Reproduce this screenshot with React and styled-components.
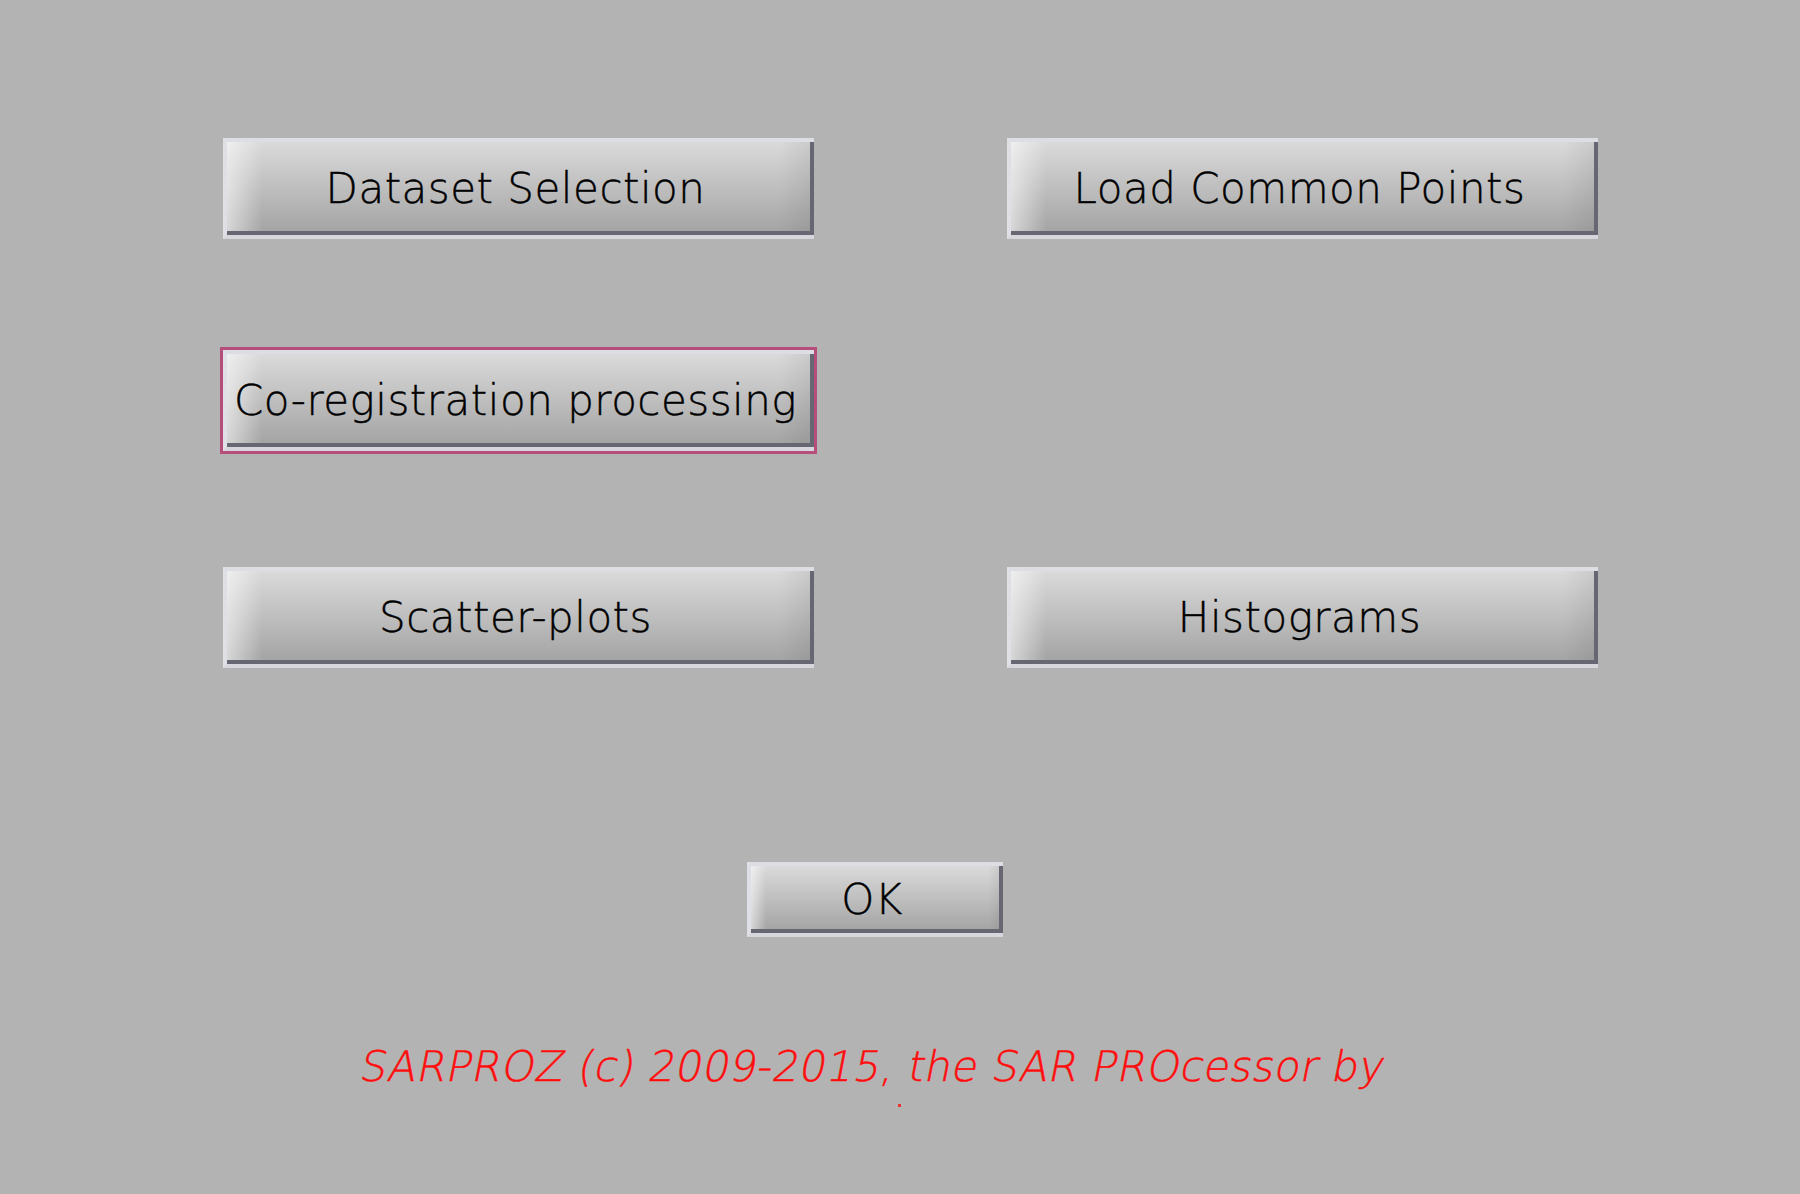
import React from 'react';
import styled, { createGlobalStyle } from 'styled-components';

const GlobalStyle = createGlobalStyle`
  html, body {
    margin: 0;
    padding: 0;
    background: #b3b3b3;
  }
`;

const Page = styled.div`
  width: 1800px;
  height: 1194px;
  background: #b3b3b3;
  overflow: hidden;
  display: flex;
  flex-direction: column;
  padding: 138px 0 0 223px;
  box-sizing: border-box;
  font-family: "DejaVu Sans", sans-serif;
`;

const ButtonGrid = styled.div`
  display: grid;
  grid-template-columns: 591px 591px;
  grid-template-rows: 101px 106px 101px;
  column-gap: 193px;
  row-gap: 111px;
  align-items: start;
`;

const Slot = styled.div``;

const Button = styled.div`
  box-sizing: border-box;
  width: ${props => props.w || 591}px;
  height: ${props => props.h || 101}px;
  display: flex;
  align-items: center;
  justify-content: center;
  padding-right: 10px;
  font-family: "DejaVu Sans", sans-serif;
  font-weight: 200;
  letter-spacing: 0.5px;
  font-size: ${props => props.fs || 42}px;
  color: #000;
  -webkit-text-stroke: 0.4px #000;
  border-top: 4px solid #dddde4;
  border-left: 4px solid #dfdfe6;
  border-bottom: 4px solid #d6d6dc;
  background:
    linear-gradient(to right, rgba(255, 255, 255, 0.55), rgba(255, 255, 255, 0) 6%, rgba(0, 0, 0, 0) 94%, rgba(0, 0, 0, 0.08)),
    linear-gradient(#dadada, #a2a2a2);
  box-shadow: inset -4px -4px 0 #676773;
  outline: ${props => (props.focused ? '3px solid #b64e7c' : 'none')};
  white-space: nowrap;
`;

const OkRow = styled.div`
  margin: 194px 0 0 524px;
`;

const Footer = styled.div`
  margin: 105px 0 0 138px;
  font-family: "DejaVu Sans", sans-serif;
  font-weight: 200;
  letter-spacing: 0.35px;
  font-size: 42px;
  line-height: 50px;
  color: #ff0d0d;
  -webkit-text-stroke: 0.5px #ff0d0d;
  white-space: nowrap;
  transform: skewX(-11deg);
  transform-origin: center;
`;

const Dot = styled.div`
  width: 3px;
  height: 3px;
  background: #ee3030;
  margin: 12px 0 0 675px;
`;

export default function App() {
  return (
    <>
      <GlobalStyle />
      <Page>
        <ButtonGrid>
          <Button>Dataset Selection</Button>
          <Button>Load Common Points</Button>
          <Button focused>Co-registration processing</Button>
          <Slot />
          <Button>Scatter-plots</Button>
          <Button>Histograms</Button>
        </ButtonGrid>
        <OkRow>
          <Button w={256} h={75}>OK</Button>
        </OkRow>
        <Footer>SARPROZ (c) 2009-2015, the SAR PROcessor by</Footer>
        <Dot />
      </Page>
    </>
  );
}
